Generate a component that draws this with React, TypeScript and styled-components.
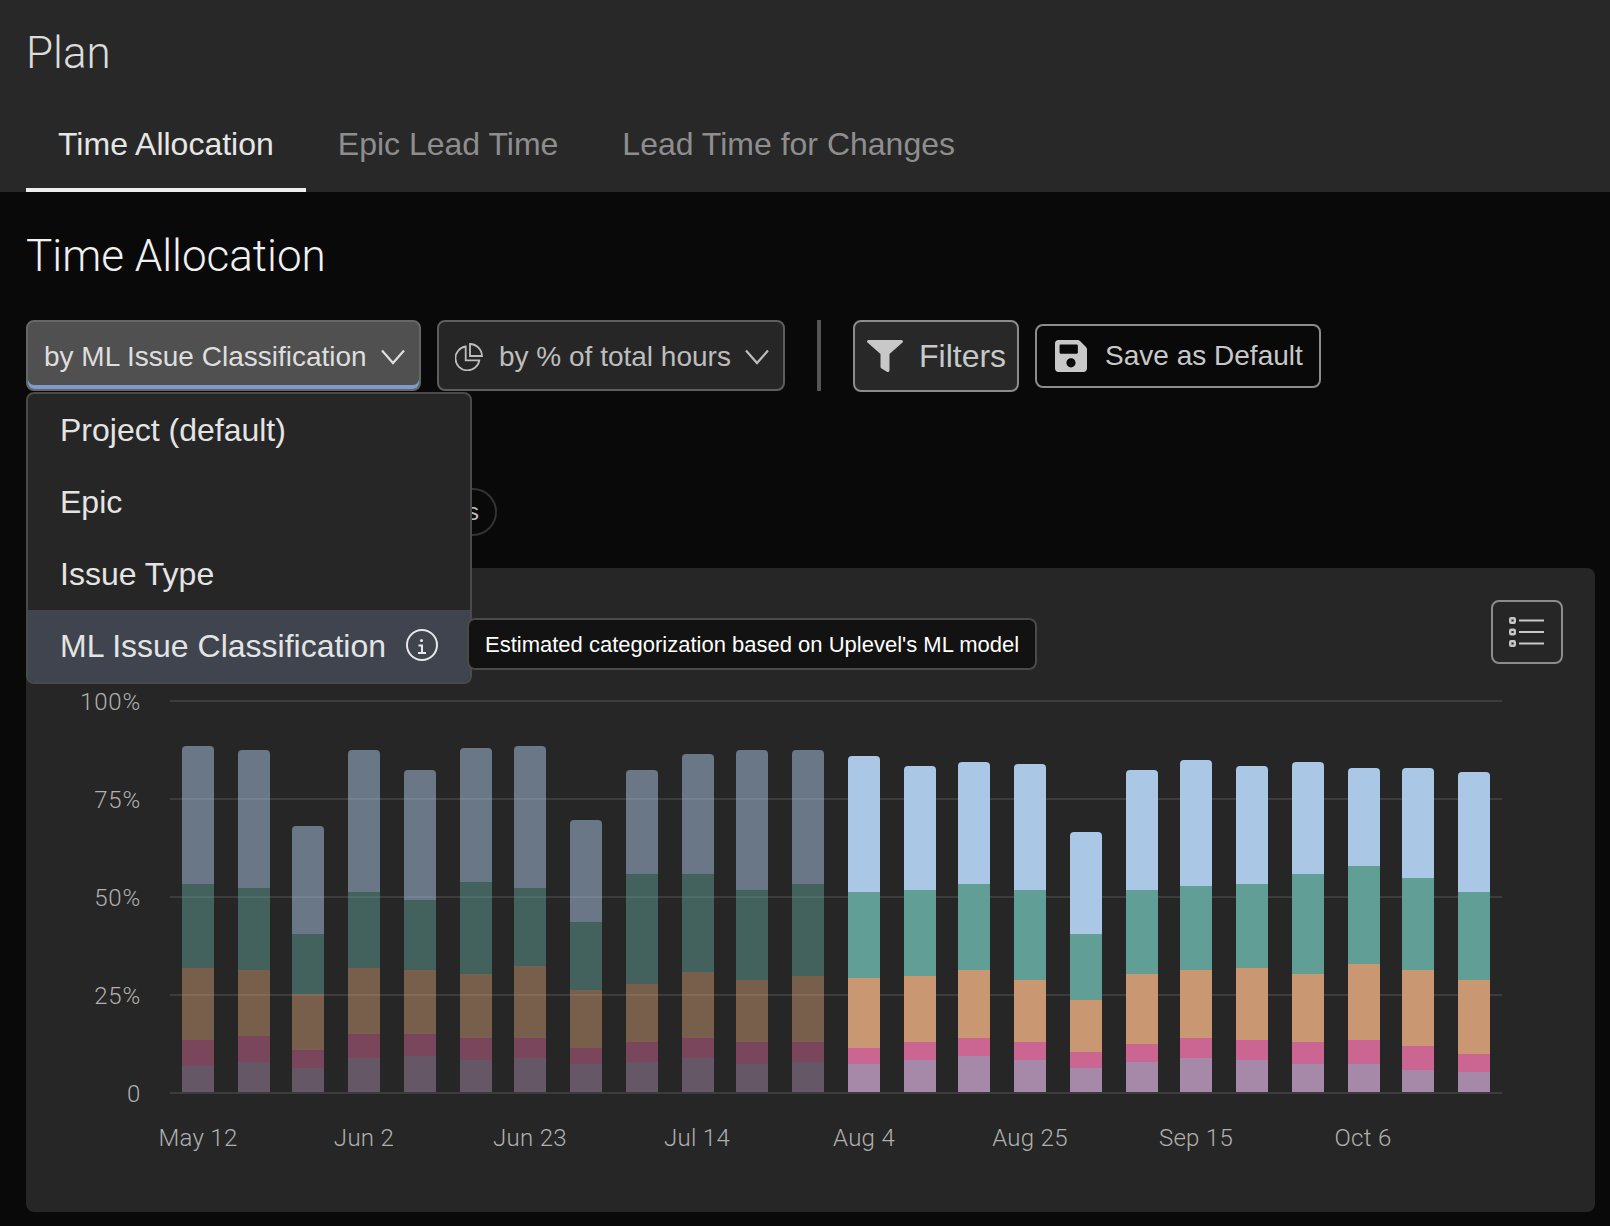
import React from 'react';
import styled, { createGlobalStyle } from 'styled-components';

const GlobalStyle = createGlobalStyle`
  html, body { margin: 0; padding: 0; background: #090909; }
  body { font-family: "Liberation Sans", Arial, sans-serif; }
  * { box-sizing: border-box; }
`;

const Page = styled.div`
  width: 1610px;
  height: 1226px;
  overflow: hidden;
  background: #090909;
`;

const Header = styled.header`
  height: 192px;
  background: #282828;
  padding: 28px 26px 0;
  display: flex;
  flex-direction: column;
  justify-content: space-between;
`;

const AppTitle = styled.h1`
  margin: 0;
  font-family: Roboto, sans-serif;
  font-weight: 300;
  font-size: 44px;
  line-height: 50px;
  color: #dcdcdc;
`;

const Tabs = styled.nav`
  display: flex;
`;

const Tab = styled.div<{ $active?: boolean }>`
  padding: 0 32px 16px;
  height: 76px;
  display: flex;
  align-items: center;
  font-size: 32px;
  color: ${p => (p.$active ? '#e6e6e6' : '#8e8e8e')};
  border-bottom: 4px solid ${p => (p.$active ? '#eeeeee' : 'transparent')};
`;

const Main = styled.main`
  padding: 0 15px 0 26px;
`;

const PageTitle = styled.h2`
  margin: 0;
  padding-top: 38px;
  height: 128px;
  font-family: Roboto, sans-serif;
  font-weight: 300;
  font-size: 44px;
  line-height: 52px;
  color: #f0f0f0;
`;

const Controls = styled.div`
  display: flex;
  align-items: flex-start;
  height: 72px;
`;

const SelectWrap = styled.div`
  position: relative;
  margin-right: 16px;
`;

const Select = styled.div<{ $open?: boolean; $width: number }>`
  width: ${p => p.$width}px;
  height: 71px;
  border-radius: 8px;
  border: 2px solid ${p => (p.$open ? '#666666' : '#5e5e5e')};
  background: ${p => (p.$open ? '#505050' : '#262626')};
  box-shadow: ${p => (p.$open ? 'inset 0 -4px #7e9bc9' : 'none')};
  padding: 2px 14px 0 16px;
  display: flex;
  align-items: center;
  justify-content: space-between;
  font-size: 28px;
  color: ${p => (p.$open ? '#dedede' : '#bdbdbd')};
`;

const SelectLabel = styled.span`
  display: flex;
  align-items: center;
  gap: 16px;
`;

const Divider = styled.div`
  width: 4px;
  height: 71px;
  background: #555555;
  margin: 0 32px 0 32px;
`;

const OutlineButton = styled.div<{ $raised?: boolean }>`
  display: flex;
  align-items: center;
  align-self: center;
  border: 2px solid #8c8c8c;
  border-radius: 8px;
  color: #c8c8c8;
  background: ${p => (p.$raised ? '#282828' : 'transparent')};
  height: ${p => (p.$raised ? 72 : 64)}px;
  padding: ${p => (p.$raised ? '0 11px 0 12px' : '0 16px 0 18px')};
  gap: ${p => (p.$raised ? 16 : 18)}px;
  font-size: ${p => (p.$raised ? 32 : 28)}px;
  margin-right: 16px;
`;

const Menu = styled.div`
  position: absolute;
  top: 72px;
  left: 0;
  width: 446px;
  height: 292px;
  background: #262626;
  border: 2px solid #4a4a4a;
  border-radius: 8px;
  overflow: hidden;
  z-index: 3;
`;

const MenuItem = styled.div<{ $selected?: boolean }>`
  height: 72px;
  padding: 0 32px;
  display: flex;
  align-items: center;
  justify-content: space-between;
  font-size: 32px;
  color: #e4e4e4;
  background: ${p => (p.$selected ? '#3f444f' : 'transparent')};
`;

const Tooltip = styled.div`
  position: absolute;
  left: 441px;
  top: 298px;
  height: 52px;
  padding: 2px 16px 0;
  display: flex;
  align-items: center;
  white-space: nowrap;
  background: #121212;
  border: 2px solid #4a4a4a;
  border-radius: 8px;
  color: #ffffff;
  font-size: 22px;
  z-index: 4;
`;

const ChipRow = styled.div`
  margin-top: 96px;
  height: 48px;
  display: flex;
`;

const Chip = styled.div`
  height: 48px;
  padding: 0 16px 0 439px;
  border: 2px solid #333333;
  border-radius: 24px;
  display: flex;
  align-items: center;
  font-size: 24px;
  color: #bdbdbd;
`;

const Card = styled.section`
  margin-top: 32px;
  height: 644px;
  background: #262626;
  border-radius: 8px;
  display: flex;
  flex-direction: column;
`;

const CardBar = styled.div`
  display: flex;
  justify-content: flex-end;
  padding: 32px 32px 0;
`;

const ListButton = styled.div`
  width: 72px;
  height: 64px;
  border: 2px solid #8c8c8c;
  border-radius: 8px;
  display: flex;
  align-items: center;
  justify-content: center;
`;

const ChartSvg = styled.svg`
  display: block;
  flex: none;
`;

const AxisText = styled.text<{ $spaced?: boolean }>`
  font-family: Roboto, sans-serif;
  font-weight: 300;
  font-size: 24px;
  letter-spacing: ${p => (p.$spaced ? '0.8px' : '0.3px')};
  fill: #b0b0b0;
`;

const InfoGlyph = styled.svg`
  margin-bottom: 2px;
  flex: none;
`;

const Chevron = () => (
  <svg width="24" height="16" viewBox="0 0 24 16" fill="none" stroke="currentColor" strokeWidth="2.2">
    <path d="M1 1.5 L12 14 L23 1.5" />
  </svg>
);

const PieIcon = () => (
  <svg width="28" height="28" viewBox="0 0 28 28" fill="none" stroke="currentColor" strokeWidth="1.8">
    <path d="M10.7 3.5 A12 12 0 1 0 24.3 17.3 H10.7 Z" />
    <path d="M15 1 A12.3 12.3 0 0 1 27 13 H15 Z" />
  </svg>
);

const FilterIcon = () => (
  <svg width="36" height="32" viewBox="0 0 512 512" preserveAspectRatio="none" fill="currentColor">
    <path d="M487.976 0H24.028C2.71 0-8.047 25.866 7.058 40.971L192 225.941V432c0 7.831 3.821 15.17 10.237 19.662l80 55.98C298.02 518.69 320 507.493 320 487.98V225.941l184.947-184.97C520.021 25.896 509.338 0 487.976 0z" />
  </svg>
);

const SaveIcon = () => (
  <svg width="32" height="32" viewBox="0 32 448 448" fill="currentColor">
    <path d="M433.941 129.941l-83.882-83.882A48 48 0 0 0 316.118 32H48C21.49 32 0 53.49 0 80v352c0 26.51 21.49 48 48 48h352c26.51 0 48-21.49 48-48V163.882a48 48 0 0 0-14.059-33.941zM224 416c-35.346 0-64-28.654-64-64 0-35.346 28.654-64 64-64s64 28.654 64 64c0 35.346-28.654 64-64 64zm96-304.52V212c0 6.627-5.373 12-12 12H76c-6.627 0-12-5.373-12-12V108c0-6.627 5.373-12 12-12h228.52c3.183 0 6.235 1.264 8.485 3.515l3.48 3.48A11.996 11.996 0 0 1 320 111.48z" />
  </svg>
);

const InfoIcon = () => (
  <InfoGlyph width="32" height="32" viewBox="0 0 32 32" fill="none" stroke="#e8e8e8" strokeWidth="2">
    <circle cx="16" cy="16" r="15" />
    <path d="M12.5 16.5 H16 V24 M12 24 H20" />
    <circle cx="15.5" cy="11.5" r="1.5" fill="#e8e8e8" stroke="none" />
  </InfoGlyph>
);

const ListIcon = () => (
  <svg width="36" height="30" viewBox="0 0 36 30" fill="none">
    {[3.5, 15, 26.5].map(y => (
      <g key={y}>
        <rect x="1.2" y={y - 2.3} width="4.6" height="4.6" rx="1" stroke="#c8c8c8" strokeWidth="2.4" />
        <path d={`M10 ${y}H35`} stroke="#c8c8c8" strokeWidth="2" />
      </g>
    ))}
  </svg>
);

const CARD_X = 26;
const CHART_Y = 664;
const BAR_W = 32;

const BARS: [number, number[]][] = [
  [182, [746, 884, 968, 1040, 1066]],
  [238, [750, 888, 970, 1036, 1062]],
  [292, [826, 934, 994, 1050, 1068]],
  [348, [750, 892, 968, 1034, 1058]],
  [404, [770, 900, 970, 1034, 1056]],
  [460, [748, 882, 974, 1038, 1060]],
  [514, [746, 888, 966, 1038, 1058]],
  [570, [820, 922, 990, 1048, 1064]],
  [626, [770, 874, 984, 1042, 1062]],
  [682, [754, 874, 972, 1038, 1058]],
  [736, [750, 890, 980, 1042, 1064]],
  [792, [750, 884, 976, 1042, 1062]],
  [848, [756, 892, 978, 1048, 1064]],
  [904, [766, 890, 976, 1042, 1060]],
  [958, [762, 884, 970, 1038, 1056]],
  [1014, [764, 890, 980, 1042, 1060]],
  [1070, [832, 934, 1000, 1052, 1068]],
  [1126, [770, 890, 974, 1044, 1062]],
  [1180, [760, 886, 970, 1038, 1058]],
  [1236, [766, 884, 968, 1040, 1060]],
  [1292, [762, 874, 974, 1042, 1064]],
  [1348, [768, 866, 964, 1040, 1064]],
  [1402, [768, 878, 970, 1046, 1070]],
  [1458, [772, 892, 980, 1054, 1072]],
];

const COLORS = ['#abc7e6', '#619e96', '#c99872', '#cb6692', '#a689a8'];
const BASE = 1092;
const DIM_COUNT = 12;

const Y_TICKS: [string, number][] = [
  ['100%', 701],
  ['75%', 799],
  ['50%', 897],
  ['25%', 995],
  ['0', 1093],
];

const X_TICKS: [string, number][] = [
  ['May 12', 198],
  ['Jun 2', 364],
  ['Jun 23', 530],
  ['Jul 14', 697],
  ['Aug 4', 864],
  ['Aug 25', 1030],
  ['Sep 15', 1196],
  ['Oct 6', 1363],
];

const Bar = ({ x, edges, dim }: { x: number; edges: number[]; dim: boolean }) => {
  const left = x - CARD_X;
  const ys = [...edges, BASE].map(v => v - CHART_Y);
  return (
    <g opacity={dim ? 0.5 : 1}>
      <path
        d={`M${left} ${ys[1]}V${ys[0] + 4}q0 -4 4 -4H${left + BAR_W - 4}q4 0 4 4V${ys[1]}Z`}
        fill={COLORS[0]}
      />
      {COLORS.slice(1).map((c, i) => (
        <rect key={c} x={left} y={ys[i + 1]} width={BAR_W} height={ys[i + 2] - ys[i + 1]} fill={c} />
      ))}
    </g>
  );
};

const Chart = () => (
  <ChartSvg width="1569" height="548" viewBox="0 0 1569 548">
    {Y_TICKS.map(([label, y]) => (
      <g key={label}>
        <path d={`M${170 - CARD_X} ${y - CHART_Y}H${1502 - CARD_X}`} stroke="#3c3c3c" strokeWidth="2" />
        <AxisText $spaced x={141 - CARD_X} y={y - CHART_Y + 9} textAnchor="end">
          {label}
        </AxisText>
      </g>
    ))}
    {BARS.map(([x, edges], i) => (
      <Bar key={x} x={x} edges={edges} dim={i < DIM_COUNT} />
    ))}
    {X_TICKS.map(([label, x]) => (
      <AxisText key={label} x={x - CARD_X} y={1146 - CHART_Y} textAnchor="middle">
        {label}
      </AxisText>
    ))}
  </ChartSvg>
);

export default function App() {
  return (
    <Page>
      <GlobalStyle />
      <Header>
        <AppTitle>Plan</AppTitle>
        <Tabs>
          <Tab $active>Time Allocation</Tab>
          <Tab>Epic Lead Time</Tab>
          <Tab>Lead Time for Changes</Tab>
        </Tabs>
      </Header>
      <Main>
        <PageTitle>Time Allocation</PageTitle>
        <Controls>
          <SelectWrap>
            <Select $open $width={395}>
              <span>by ML Issue Classification</span>
              <Chevron />
            </Select>
            <Menu>
              <MenuItem>Project (default)</MenuItem>
              <MenuItem>Epic</MenuItem>
              <MenuItem>Issue Type</MenuItem>
              <MenuItem $selected>
                ML Issue Classification
                <InfoIcon />
              </MenuItem>
            </Menu>
            <Tooltip>Estimated categorization based on Uplevel's ML model</Tooltip>
          </SelectWrap>
          <Select $width={348}>
            <SelectLabel>
              <PieIcon />
              by % of total hours
            </SelectLabel>
            <Chevron />
          </Select>
          <Divider />
          <OutlineButton $raised>
            <FilterIcon />
            Filters
          </OutlineButton>
          <OutlineButton>
            <SaveIcon />
            Save as Default
          </OutlineButton>
        </Controls>
        <ChipRow>
          <Chip>s</Chip>
        </ChipRow>
        <Card>
          <CardBar>
            <ListButton>
              <ListIcon />
            </ListButton>
          </CardBar>
          <Chart />
        </Card>
      </Main>
    </Page>
  );
}
